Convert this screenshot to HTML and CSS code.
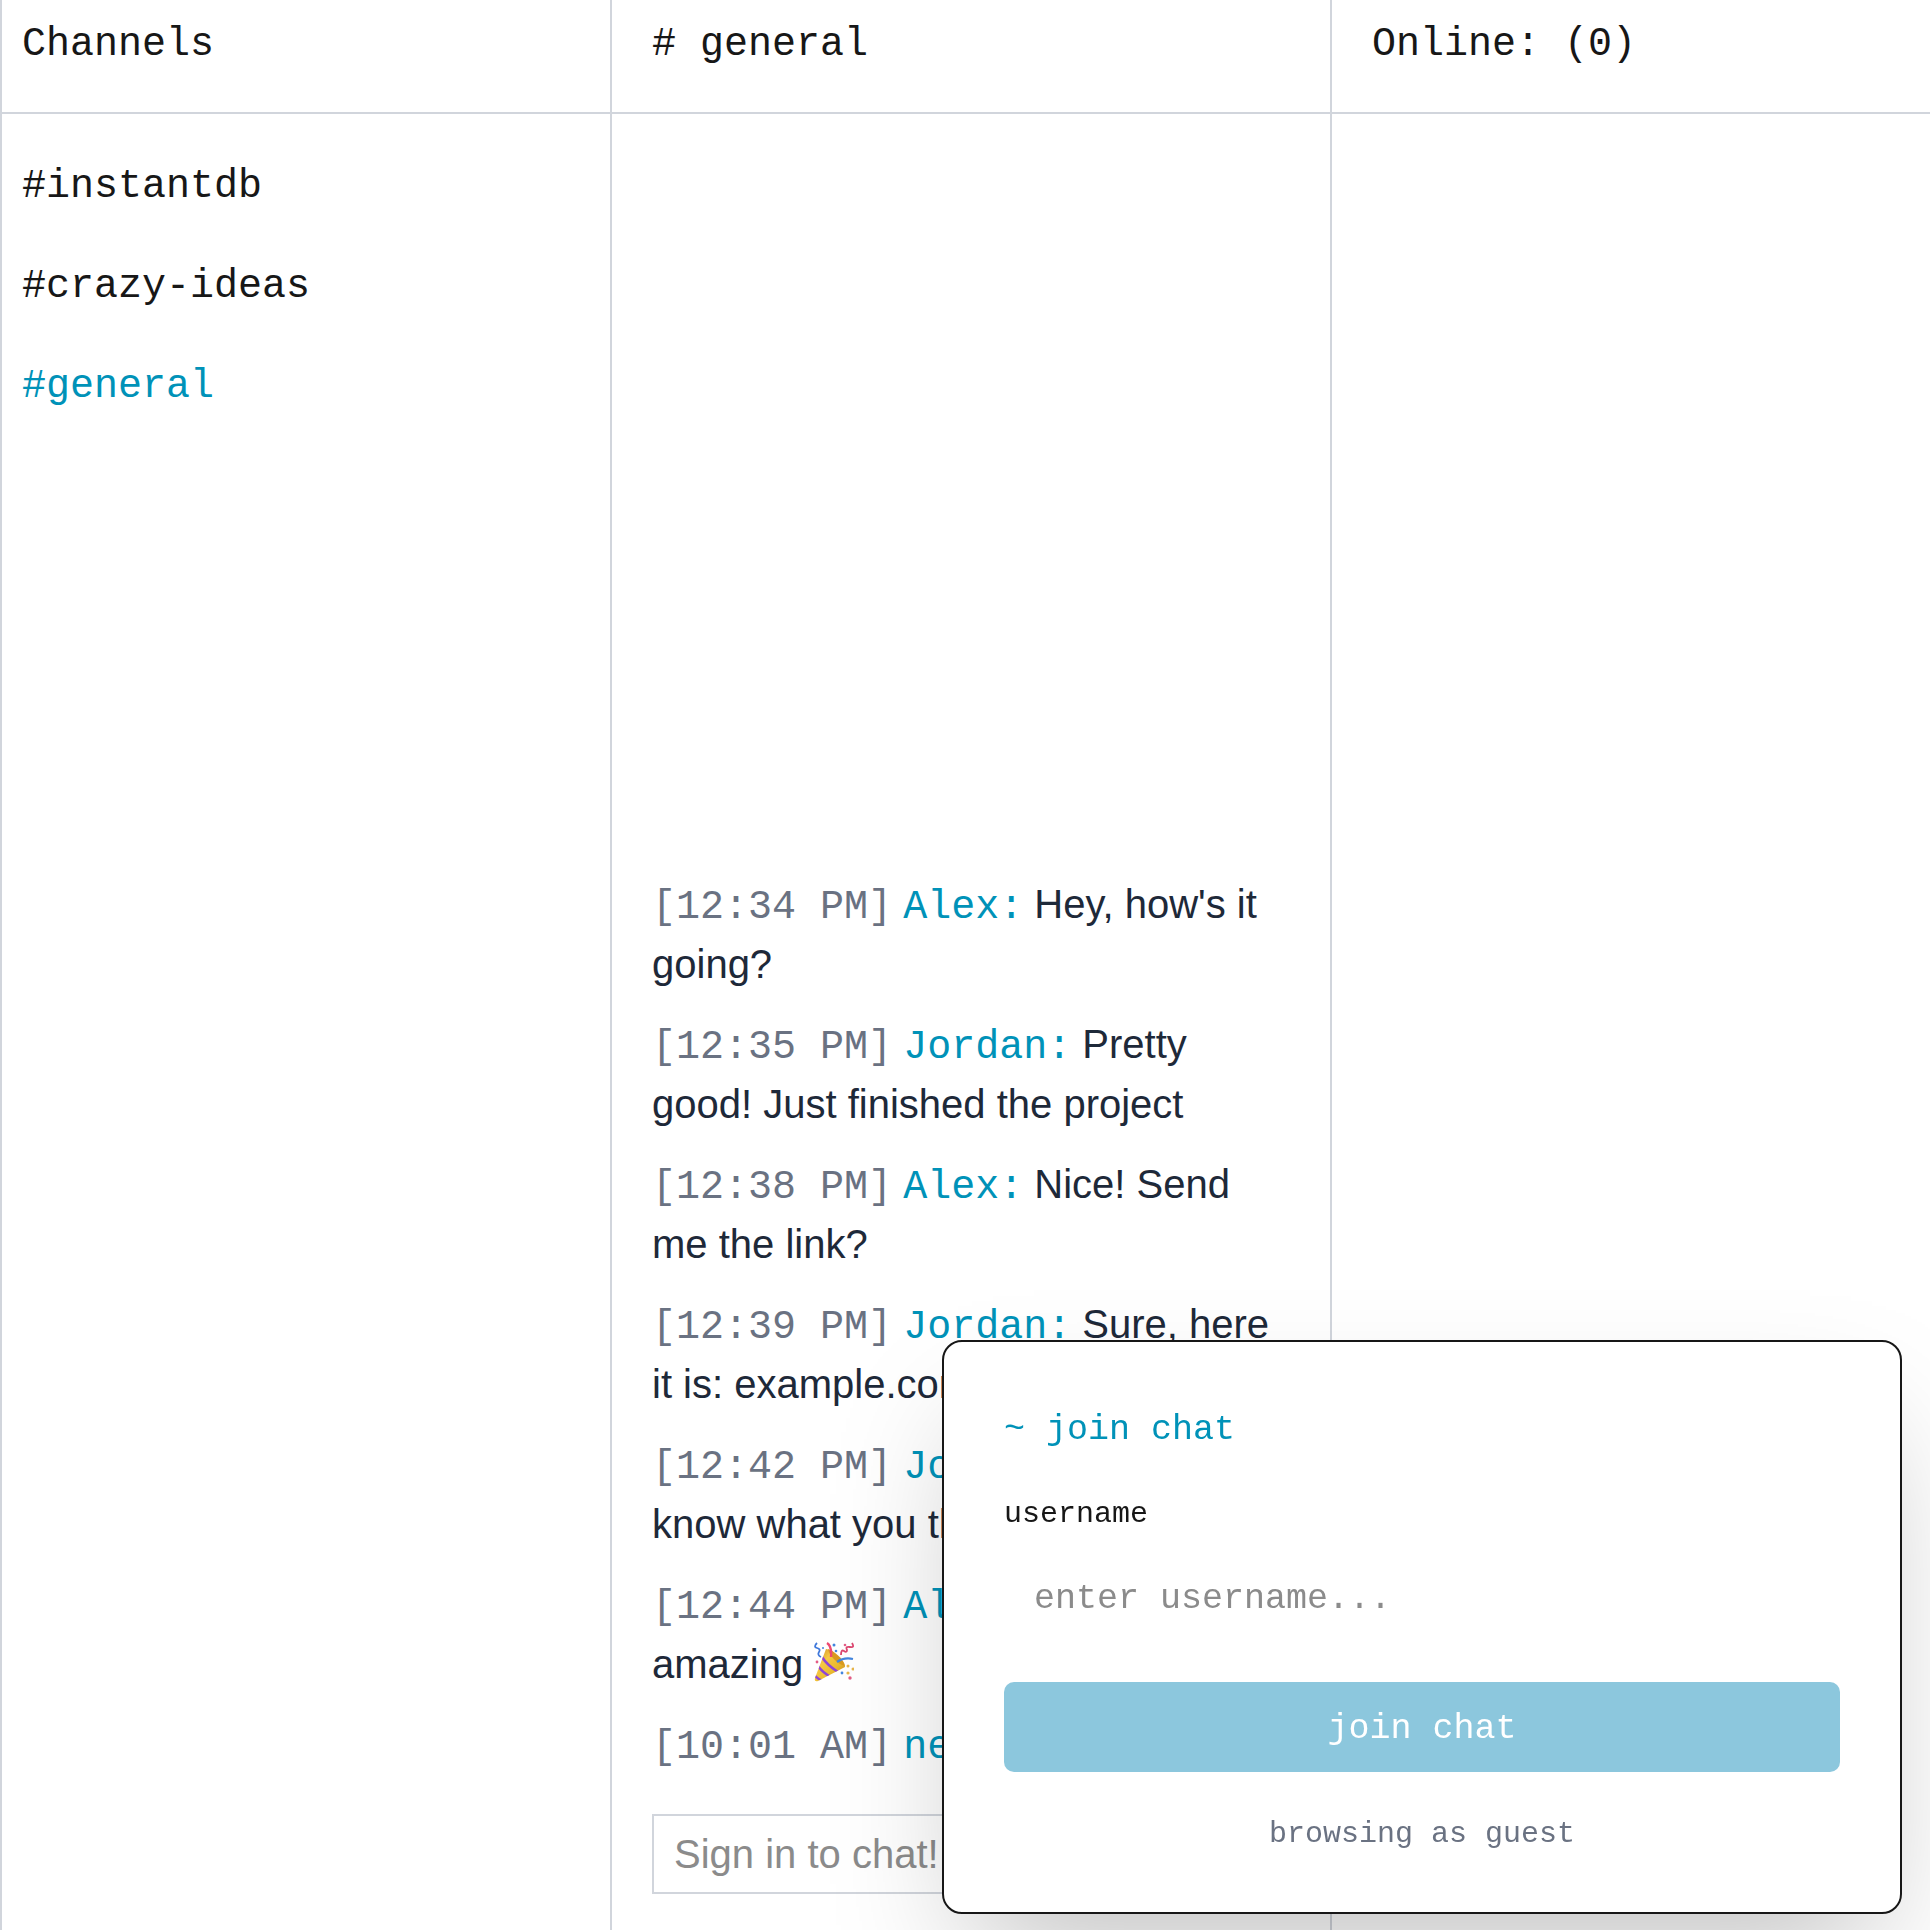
FILE: index.html
```html
<!DOCTYPE html>
<html lang="en">
<head>
<meta charset="utf-8">
<meta name="viewport" content="width=device-width, initial-scale=1">
<title>Chat</title>
<link rel="stylesheet" href="styles.css">
</head>
<body>
<div class="app">
  <aside class="column channels">
    <header class="column-header">Channels</header>
    <nav class="channel-list">
      <a class="channel" href="#instantdb">#instantdb</a>
      <a class="channel" href="#crazy-ideas">#crazy-ideas</a>
      <a class="channel active" href="#general">#general</a>
    </nav>
  </aside>

  <main class="column room">
    <header class="column-header"># general</header>
    <div class="messages">
      <p class="message"><span class="time">[12:34 PM]</span> <span class="author">Alex:</span> Hey, how's it going?</p>
      <p class="message"><span class="time">[12:35 PM]</span> <span class="author">Jordan:</span> Pretty good! Just finished the project</p>
      <p class="message"><span class="time">[12:38 PM]</span> <span class="author">Alex:</span> Nice! Send me the link?</p>
      <p class="message"><span class="time">[12:39 PM]</span> <span class="author">Jordan:</span> Sure, here it is: example.com</p>
      <p class="message"><span class="time">[12:42 PM]</span> <span class="author">Jordan:</span> Let me know what you think</p>
      <p class="message"><span class="time">[12:44 PM]</span> <span class="author">Alex:</span> This looks amazing <svg class="emoji" viewBox="0 0 40 40" role="img" aria-label="party popper">
        <defs>
          <linearGradient id="cone" x1="0" y1="0" x2="1" y2="1">
            <stop offset="0" stop-color="#c9861f"/><stop offset=".35" stop-color="#f6c944"/><stop offset=".65" stop-color="#eab92e"/><stop offset="1" stop-color="#b9781c"/>
          </linearGradient>
          <clipPath id="cone-clip"><path d="M12 7C17 7 31 19 31 25L4 39Q0 40 1 36Z"/></clipPath>
        </defs>
        <path d="M12 7C17 7 31 19 31 25L4 39Q0 40 1 36Z" fill="url(#cone)"/>
        <path d="M14 7C20 9 30 17 31 24C25 23 15 14 14 7Z" fill="#d99a20"/>
        <g clip-path="url(#cone-clip)" fill="none" stroke="#8e46d8" stroke-width="2.4">
          <path d="M8 15Q13 23 24 30M4 24Q9 31 17 35M0 33Q4 37 9 39"/>
        </g>
        <path d="M13 1Q18 4 17 15" fill="none" stroke="#ee4a72" stroke-width="2.4"/>
        <path d="M23 20Q30 15 39 17" fill="none" stroke="#4386df" stroke-width="2.2"/>
        <path d="M3 1Q-1 5 3 6T5 10T7 15" fill="none" stroke="#3f78db" stroke-width="1.8"/>
        <path d="M38 1Q41 6 36 5T33 8Q33 11 30 9T27 13" fill="none" stroke="#dc4770" stroke-width="1.8"/>
        <g fill="#4386df"><circle cx="20" cy="3" r="1.5"/><circle cx="22" cy="9" r="1.3"/><circle cx="9" cy="6" r="1"/><circle cx="28" cy="31" r="1.4"/></g>
        <g fill="#e45d86"><circle cx="31" cy="3" r="1.3"/><circle cx="3" cy="20" r="1.4"/><circle cx="36" cy="36" r="1.7"/></g>
        <g fill="#e8b64a"><circle cx="34" cy="24" r="1.5"/><circle cx="39" cy="27" r="1.5"/><circle cx="34" cy="31" r="1.6"/></g>
      </svg></p>
      <p class="message"><span class="time">[10:01 AM]</span> <span class="author">newuser:</span> hello</p>
    </div>
    <form class="composer">
      <input class="composer-input" type="text" placeholder="Sign in to chat!" aria-label="Message">
    </form>
  </main>

  <aside class="column members">
    <header class="column-header">Online: (0)</header>
  </aside>
</div>

<form class="join-card">
  <h2 class="join-title">~ join chat</h2>
  <label class="join-label" for="username">username</label>
  <input class="join-input" id="username" type="text" placeholder="enter username...">
  <button class="join-button" type="button">join chat</button>
  <p class="join-note">browsing as guest</p>
</form>
</body>
</html>
```
FILE: styles.css
```css
:root {
  --mono: "Liberation Mono", monospace;
  --sans: "Liberation Sans", Arial, sans-serif;
  --line: #d1d5dc;
  --ink: #171717;
  --accent: #0092b8;
  --muted: #6a7282;
}

* {
  box-sizing: border-box;
}

body {
  margin: 0;
  background: #fff;
  color: var(--ink);
  font: 40px/60px var(--mono);
}

.app {
  display: grid;
  grid-template-columns: minmax(0, 61fr) minmax(0, 72fr) minmax(0, 60fr);
  min-height: 100vh;
}

.column {
  display: flex;
  flex-direction: column;
  border-left: 2px solid var(--line);
}

.column-header {
  padding: 15px 40px 37px;
  border-bottom: 2px solid var(--line);
}

.channels .column-header {
  padding-left: 20px;
}

.channel-list {
  display: flex;
  flex-direction: column;
  align-items: flex-start;
  gap: 40px;
  padding: 43px 20px;
}

.channel {
  color: inherit;
  text-decoration: none;
}

.channel.active {
  color: var(--accent);
}

.room {
  border-right: 0;
}

.messages {
  flex: 1;
  display: flex;
  flex-direction: column;
  justify-content: flex-end;
  gap: 20px;
  padding: 40px;
  color: #1e2939;
  font-family: var(--sans);
}

.message {
  margin: 0;
}

.time,
.author {
  font-family: var(--mono);
  line-height: 40px;
}

.time {
  color: var(--muted);
}

.author {
  color: var(--accent);
}

.emoji {
  width: 40px;
  height: 40px;
  vertical-align: -4px;
}

.composer {
  padding: 0 40px 36px;
}

.composer-input {
  display: block;
  width: 100%;
  height: 80px;
  padding: 0 20px;
  border: 2px solid var(--line);
  border-radius: 0;
  background: transparent;
  font: 40px/60px var(--sans);
}

::placeholder {
  color: #8b8b8b;
  opacity: 1;
}

.join-card {
  position: fixed;
  right: 28px;
  bottom: 16px;
  display: flex;
  flex-direction: column;
  width: 960px;
  max-width: calc(100% - 56px);
  padding: 60px 60px 58px;
  border: 2px solid var(--ink);
  border-radius: 20px;
  background: #fff;
  box-shadow: 0 62px 125px -30px rgba(0, 0, 0, 0.25);
}

.join-title {
  margin: 0 0 36px;
  color: var(--accent);
  font: 35px/56px var(--mono);
}

.join-label {
  margin-bottom: 20px;
  font-size: 30px;
  line-height: 40px;
}

.join-input {
  height: 90px;
  margin-bottom: 38px;
  padding: 0 30px;
  border: 0;
  background: transparent;
  font: 35px/56px var(--mono);
}

.join-button {
  height: 90px;
  margin-bottom: 42px;
  padding: 4px 30px 0;
  border: 0;
  border-radius: 10px;
  background: #8cc7dd;
  color: #fff;
  font: 35px/56px var(--mono);
}

.join-note {
  margin: 0;
  color: var(--muted);
  font-size: 30px;
  line-height: 40px;
  text-align: center;
}
```
